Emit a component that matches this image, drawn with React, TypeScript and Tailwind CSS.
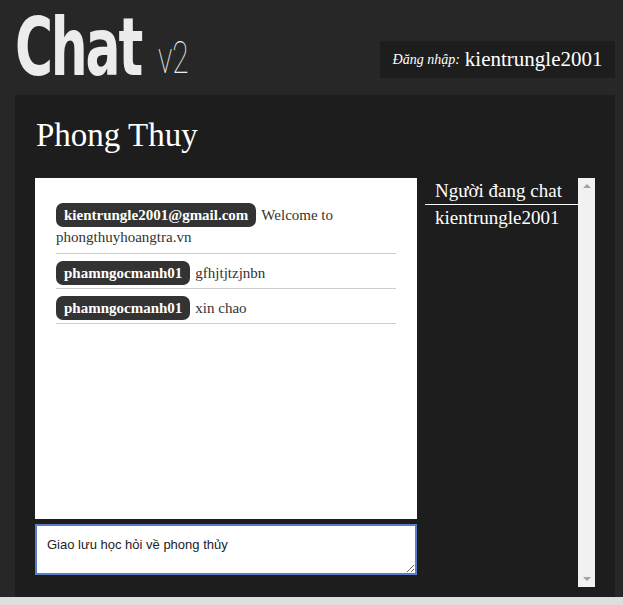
import React from 'react';

const serif = { fontFamily: '"Liberation Serif", "DejaVu Serif", serif' };
const condensed = { fontFamily: '"DejaVu Sans Condensed", "Liberation Sans Narrow", "Liberation Sans", sans-serif' };

const messages = [
  { user: 'kientrungle2001@gmail.com', text: 'Welcome to phongthuyhoangtra.vn' },
  { user: 'phamngocmanh01', text: 'gfhjtjtzjnbn' },
  { user: 'phamngocmanh01', text: 'xin chao' },
];

export default function App() {
  return (
    <div className="w-[623px] h-[605px] overflow-hidden bg-[#272727] flex flex-col" style={serif}>
      {/* header */}
      <div className="h-[95px] flex items-start justify-between pl-[15px] pr-[8px] shrink-0">
        <div className="flex items-start text-[#ececec]">
          <div className="w-[128px] whitespace-nowrap mt-[11px]">
            <span
              className="inline-block text-[80px] leading-[74px] font-bold tracking-[-3px] scale-x-[0.72] origin-left"
              style={condensed}
            >
              Chat
            </span>
          </div>
          <div className="w-[30px] ml-[15px] mt-[36px] whitespace-nowrap">
            <span
              className="inline-block text-[44px] leading-[44px] font-thin scale-x-[0.68] origin-left"
              style={{ fontFamily: 'Roboto, "Open Sans", sans-serif', fontWeight: 100 }}
            >
              v2
            </span>
          </div>
        </div>
        <div className="mt-[41px] h-[37px] w-[235px] bg-[#1d1d1d] flex items-center justify-center gap-[5px] text-white">
          <span className="italic text-[14px]">Đăng nhập:</span>
          <span className="text-[21px]">kientrungle2001</span>
        </div>
      </div>

      {/* main panel */}
      <div className="ml-[15px] w-[600px] bg-[#1d1d1d] h-[502px] shrink-0 px-[20px] pt-[21px]">
        <h1 className="text-white text-[33px] leading-[38px] ml-px">Phong Thuy</h1>
        <div className="flex mt-[24px] gap-[8px]">
          <div className="w-[382px] flex flex-col gap-[5px]">
            <div className="bg-white h-[341px] px-[21px] pt-[25px]">
              {messages.map((m, i) => (
                <div
                  key={i}
                  className={`border-b border-[#ccc] mb-[7px] text-[15px] leading-[20px] text-[#333] ${i === 0 ? 'pb-[6px]' : 'pb-[3px]'}`}
                >
                  <span className="inline-block bg-[#333] text-white font-bold text-[15px] leading-[18px] px-[8px] py-[3px] rounded-[7px] mr-[5px]">
                    {m.user}
                  </span>
                  {m.text}
                </div>
              ))}
            </div>
            <textarea
              defaultValue="Giao lưu học hỏi về phong thủy"
              className="h-[51px] border-2 border-[#5a7fc8] bg-white px-[10px] pt-[9px] text-[13px] text-[#222] resize-y outline-none"
              style={{ fontFamily: '"Liberation Sans", Arial, sans-serif' }}
            />
          </div>
          <div className="flex w-[170px] h-[409px]">
            <div className="flex-1 text-white pt-[2px]">
              <div className="text-[19px] leading-[21px] pl-[10px] pb-[3px] border-b border-white">Người đang chat</div>
              <div className="text-[19px] leading-[21px] pl-[10px] pt-[2px]">kientrungle2001</div>
            </div>
            <div className="w-[17px] bg-[#f1f1f1] flex flex-col justify-between items-center py-[6px]">
              <span className="w-0 h-0 border-x-[4px] border-x-transparent border-b-[4px] border-b-[#a3a3a3]" />
              <span className="w-0 h-0 border-x-[4px] border-x-transparent border-t-[4px] border-t-[#a3a3a3]" />
            </div>
          </div>
        </div>
      </div>
      <div className="flex-1 bg-[#dedede]" />
    </div>
  );
}
